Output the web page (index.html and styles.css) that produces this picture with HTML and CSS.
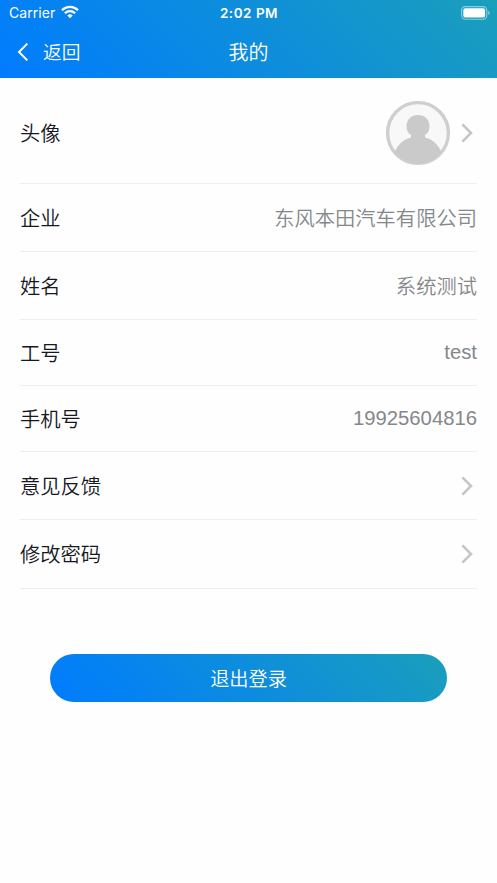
FILE: index.html
```html
<!DOCTYPE html>
<html lang="zh-CN">
<head>
<meta charset="utf-8">
<title>我的</title>
<link rel="stylesheet" href="styles.css">
</head>
<body>
<header class="header">
  <div class="status">
    <div class="carrier">Carrier
      <svg width="18" height="14" viewBox="0 0 18 14" fill="none" stroke="#fff" stroke-width="2.3"><path d="M1 5.2a11.4 11.4 0 0 1 16 0M3.9 8.3a7.3 7.3 0 0 1 10.2 0"/><path d="M6.3 10.5a4 4 0 0 1 5.4 0L9 13.2z" fill="#fff" stroke="none"/></svg>
    </div>
    <div class="time">2:02 PM</div>
    <div class="battery"><svg width="30" height="14" viewBox="0 0 30 14"><rect x=".6" y=".6" width="25.2" height="12.6" rx="3.6" fill="none" stroke="#fff" stroke-opacity=".5" stroke-width="1.1"/><rect x="2.3" y="2.3" width="21.8" height="9.2" rx="2" fill="#fff"/><path d="M27.2 4.8q1.5.6 1.5 2.1t-1.5 2.1z" fill="#fff" fill-opacity=".5"/></svg></div>
  </div>
  <nav class="nav">
    <a class="back"><svg width="12" height="20" viewBox="0 0 12 20" fill="none" stroke="#fff" stroke-width="2"><path d="M10.3 1.6 2 10l8.3 8.4"/></svg><span>返回</span></a>
    <h1 class="title">我的</h1>
  </nav>
</header>
<main>
  <ul class="list">
    <li class="row avatar-row"><span class="label">头像</span><span class="end">
      <svg class="avatar" width="66" height="66" viewBox="0 0 66 66"><defs><clipPath id="face"><circle cx="33" cy="33" r="30.5"/></clipPath></defs><circle cx="33" cy="33" r="30.4" fill="#f8f8f8" stroke="#cfcfcf" stroke-width="3.4"/><g fill="#cacaca" clip-path="url(#face)"><path d="M33 15c-7 0-11.500 4.500-11.500 11.500 0 4 1.500 6.500 4.500 8.500v2.500C17 39.500 11 46 8 57v9h50v-9c-3-11-9-17.500-18-19.500V35c3-2 4.500-4.500 4.500-8.500C44.500 19.500 40 15 33 15z"/></g></svg>
      <svg class="arrow" width="12" height="20" viewBox="0 0 12 20"><path d="M1.4 1.4 10 10l-8.6 8.6"/></svg></span></li>
    <li class="row"><span class="label">企业</span><span class="value">东风本田汽车有限公司</span></li>
    <li class="row"><span class="label">姓名</span><span class="value">系统测试</span></li>
    <li class="row short"><span class="label">工号</span><span class="value latin">test</span></li>
    <li class="row short"><span class="label">手机号</span><span class="value latin">19925604816</span></li>
    <li class="row"><span class="label">意见反馈</span><svg class="arrow" width="12" height="20" viewBox="0 0 12 20"><path d="M1.4 1.4 10 10l-8.6 8.6"/></svg></li>
    <li class="row last"><span class="label">修改密码</span><svg class="arrow" width="12" height="20" viewBox="0 0 12 20"><path d="M1.4 1.4 10 10l-8.6 8.6"/></svg></li>
  </ul>
  <button class="logout">退出登录</button>
</main>
</body>
</html>
```
FILE: styles.css
```css
* { box-sizing: border-box; }
body {
  margin: 0;
  min-height: 883px;
  background: #fefefe;
  color: #16181f;
  font-family: "Liberation Sans", "Noto Sans CJK SC", sans-serif;
  font-size: 20.3px;
  font-weight: 350;
}
svg { display: block; flex: none; }
.header {
  height: 78px;
  color: #fff;
  background: linear-gradient(45deg, #007bff, #1a9fbb);
}
.status {
  display: grid;
  grid-template-columns: 1fr auto 1fr;
  align-items: center;
  height: 26px;
  padding: 0 6px 0 9px;
  font-family: Inter, sans-serif;
  font-size: 14px;
  font-weight: 400;
}
.carrier { display: flex; align-items: center; gap: 6px; height: 24px; margin-top: -2px; letter-spacing: .05px; }
.time { margin-right: 2px; font-size: 13.5px; font-weight: 600; letter-spacing: .5px; }
.battery { justify-self: end; }
.nav {
  display: grid;
  grid-template-columns: 1fr auto 1fr;
  align-items: center;
  height: 51px;
  padding: 0 17px;
}
.back { display: flex; align-items: center; gap: 14px; font-size: 18.7px; }
.back span { padding-bottom: 2px; }
.title { margin: 0; font-size: 20px; font-weight: 350; }
.list { margin: 0; padding: 0 20px; list-style: none; }
.row {
  display: flex;
  align-items: center;
  justify-content: space-between;
  height: 68px;
  border-bottom: 1px solid #eeeef0;
}
.short { height: 66px; }
.last { height: 69px; }
.avatar-row { height: 106px; padding-top: 4px; }
.label, .value { padding-bottom: 2px; }
.end { display: flex; align-items: center; gap: 10px; }
.arrow { margin-right: 4px; fill: none; stroke: #c6c6c6; stroke-width: 2.6; }
.value { color: #85878b; }
.value.latin { padding-bottom: 0; font-size: 20.3px; }
.logout {
  display: block;
  width: 397px;
  height: 48px;
  margin: 65px 0 0 50px;
  padding: 0 0 1px;
  border: 0;
  border-radius: 24px;
  color: #fff;
  background: linear-gradient(45deg, #007bff, #1a9fbb);
  font: 350 19.2px "Noto Sans CJK SC", sans-serif;
}
```
